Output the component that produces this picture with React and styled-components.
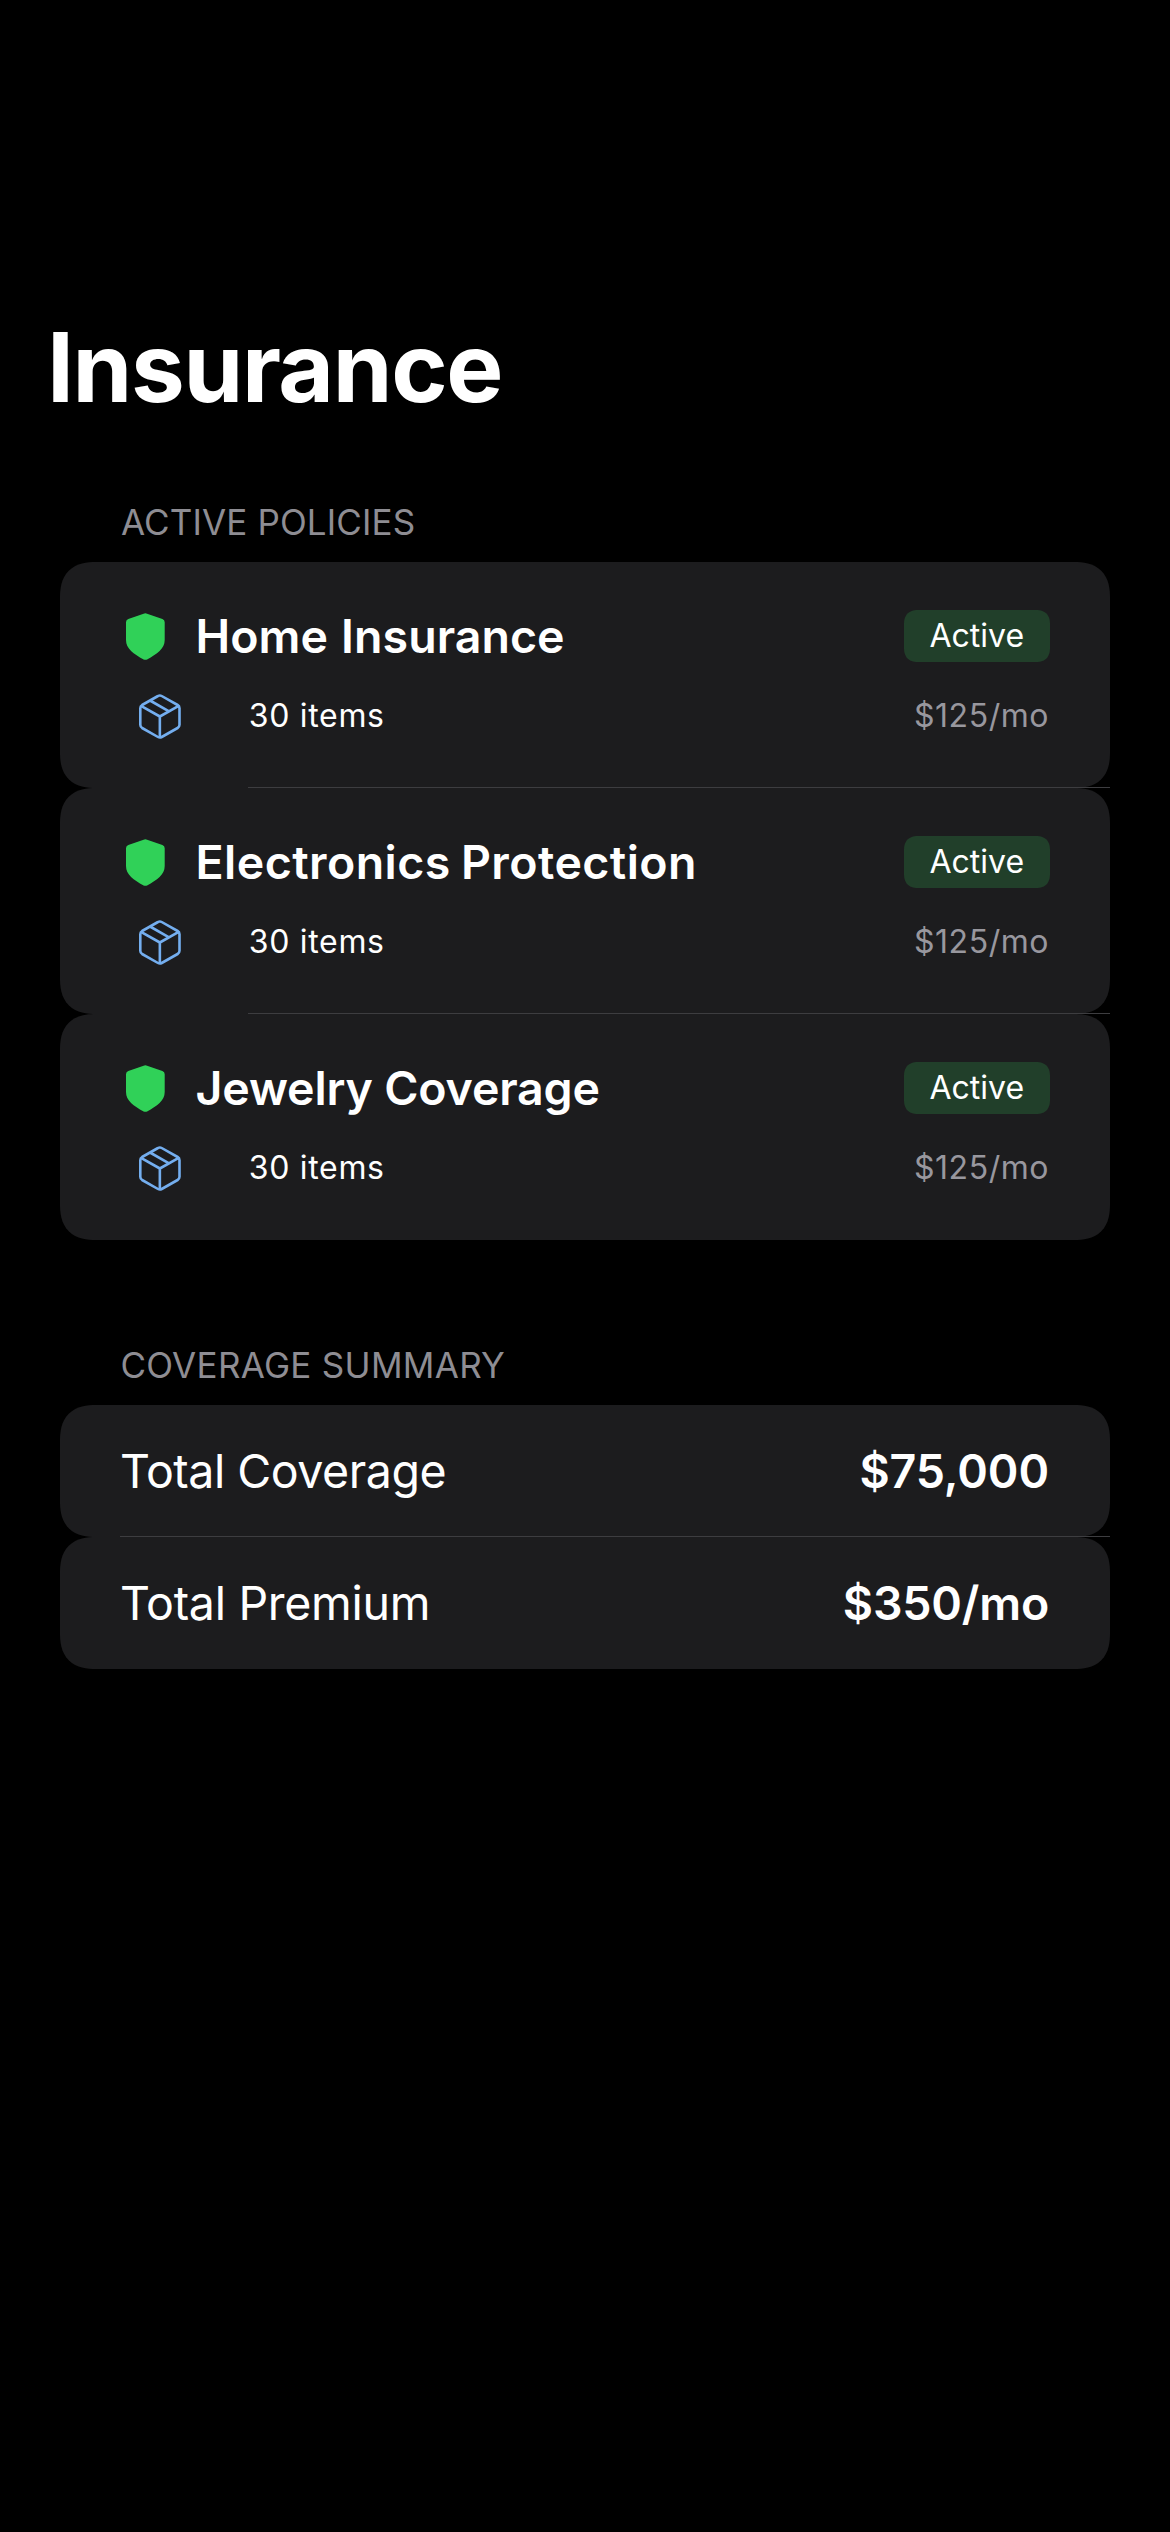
import React from 'react';
import styled, { createGlobalStyle } from 'styled-components';

const GlobalStyle = createGlobalStyle`
  body {
    margin: 0;
    background: #000;
    color: #fff;
    font-family: Inter, "Liberation Sans", sans-serif;
  }
`;

const Screen = styled.main`
  box-sizing: border-box;
  width: 1170px;
  min-height: 2532px;
  padding: 309px 60px 0;
  background: #000;
`;

const LargeTitle = styled.h1`
  margin: 0 0 76px -13px;
  font-size: 96px;
  font-weight: 700;
  line-height: 116px;
  letter-spacing: -1.34px;
`;

const Section = styled.section`
  margin-bottom: 104px;
`;

const SectionHeader = styled.h2`
  margin: 0 0 19px;
  padding-left: ${(p) => p.$inset}px;
  color: #8e8d93;
  font-size: 35px;
  font-weight: 400;
  line-height: 42px;
  letter-spacing: ${(p) => p.$tracking}px;
`;

const Card = styled.article`
  position: relative;
  box-sizing: border-box;
  height: ${(p) => p.$height}px;
  padding: ${(p) => p.$top}px 60px 0;
  background: #1c1c1e;
  border-radius: 36px;
  corner-shape: superellipse(1.31);

  &:not(:last-child)::after {
    content: "";
    position: absolute;
    right: 0;
    bottom: 0;
    left: ${(p) => p.$separator}px;
    height: 1px;
    background: #3d3d40;
  }
`;

const Row = styled.div`
  display: flex;
  align-items: center;
  height: ${(p) => p.$height}px;
  margin-bottom: ${(p) => p.$gap || 0}px;
`;

const ShieldSlot = styled.span`
  display: flex;
  box-sizing: border-box;
  width: 75.5px;
  padding-left: 6px;
`;

const BoxSlot = styled.span`
  display: flex;
  box-sizing: border-box;
  width: 128.8px;
  padding: 2px 0 0 19px;
`;

const Headline = styled.span`
  flex: 1;
  font-size: 46.5px;
  font-weight: 600;
  line-height: 56px;
  letter-spacing: ${(p) => p.$tracking}px;
  word-spacing: ${(p) => p.$wordGap}px;
`;

const Badge = styled.span`
  box-sizing: border-box;
  width: 146px;
  height: 52px;
  padding: 6px 0 7px 25.5px;
  border-radius: 15px;
  corner-shape: superellipse(1.35);
  background: #213f2a;
  font-size: 32px;
  line-height: 39px;
`;

const ItemCount = styled.span`
  flex: 1;
  font-size: 32px;
  line-height: 39px;
  letter-spacing: 0.68px;
`;

const Price = styled.span`
  margin-right: 1px;
  color: #98979e;
  font-size: 32px;
  line-height: 39px;
  letter-spacing: 0.54px;
`;

const Label = styled.span`
  flex: 1;
  font-size: 46.5px;
  line-height: 56px;
  letter-spacing: ${(p) => p.$tracking}px;
`;

const Amount = styled.span`
  margin-right: 1px;
  font-size: 46.5px;
  font-weight: 600;
  line-height: 56px;
  letter-spacing: ${(p) => p.$tracking}px;
`;

const ShieldIcon = () => (
  <svg width="39" height="47" viewBox="0 0 39 47" fill="#30d158">
    <path d="M17.6.7Q19.35-.2 21.1.7L36.4 6Q38.7 6.9 38.7 9.3V27C38.7 35.8 31 41 21.1 46.4Q19.35 47.3 17.6 46.4C7.7 41 0 35.8 0 27V9.3Q0 6.9 2.3 6Z" />
  </svg>
);

const BoxIcon = () => (
  <svg
    width="42"
    height="45"
    viewBox="0 0 42 45"
    fill="none"
    stroke="#74aeef"
    strokeWidth="2.6"
    strokeLinejoin="round"
  >
    <path d="M19 2Q20.85 .9 22.7 2L38.6 11Q40.5 12.1 40.5 14.2V30.8Q40.5 32.9 38.6 34L22.7 43Q20.85 44.1 19 43L3.1 34Q1.3 32.9 1.3 30.8V14.2Q1.3 12.1 3.1 11Z" />
    <path d="M2 11.8L20.85 22.5L39.7 11.8M20.85 22.5V43.5M11 6.5L30 17.3" />
  </svg>
);

const policies = [
  { name: 'Home Insurance', tracking: 0.05, wordGap: 1.3 },
  { name: 'Electronics Protection', tracking: 0.44, wordGap: -1.9 },
  { name: 'Jewelry Coverage', tracking: -0.16, wordGap: 0 },
];

const totals = [
  { label: 'Total Coverage', labelTracking: -0.47, amount: '$75,000', tracking: -0.1 },
  { label: 'Total Premium', labelTracking: -0.29, amount: '$350/mo', tracking: -0.2 },
];

export default function App() {
  return (
    <>
      <GlobalStyle />
      <Screen>
        <LargeTitle>Insurance</LargeTitle>
        <Section>
          <SectionHeader $inset={61} $tracking={0.13}>ACTIVE POLICIES</SectionHeader>
          {policies.map((p) => (
            <Card key={p.name} $height={226} $top={46} $separator={188}>
              <Row $height={56} $gap={32}>
                <ShieldSlot><ShieldIcon /></ShieldSlot>
                <Headline $tracking={p.tracking} $wordGap={p.wordGap}>{p.name}</Headline>
                <Badge>Active</Badge>
              </Row>
              <Row $height={39}>
                <BoxSlot><BoxIcon /></BoxSlot>
                <ItemCount>30 items</ItemCount>
                <Price>$125/mo</Price>
              </Row>
            </Card>
          ))}
        </Section>
        <Section>
          <SectionHeader $inset={60.4} $tracking={0.29}>COVERAGE SUMMARY</SectionHeader>
          {totals.map((t) => (
            <Card key={t.label} $height={132} $top={38} $separator={60}>
              <Row $height={56}>
                <Label $tracking={t.labelTracking}>{t.label}</Label>
                <Amount $tracking={t.tracking}>{t.amount}</Amount>
              </Row>
            </Card>
          ))}
        </Section>
      </Screen>
    </>
  );
}
